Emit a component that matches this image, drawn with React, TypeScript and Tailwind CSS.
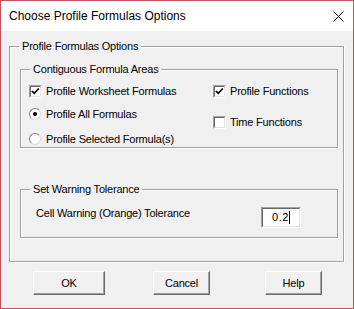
import React from "react";

const body = { fontFamily: '"Liberation Sans", Arial, sans-serif' };

function CheckBox({ checked }: { checked: boolean }) {
  return (
    <span className="w-[13px] h-[13px] flex border border-t-[#a0a0a0] border-l-[#a0a0a0] border-r-white border-b-white shrink-0">
      <span className="flex-1 flex items-center justify-center bg-white border border-t-[#696969] border-l-[#696969] border-r-[#e3e3e3] border-b-[#e3e3e3]">
        {checked && (
          <svg width="9" height="9" viewBox="0 0 9 9">
            <polyline points="1,4 3.2,6.3 7.8,1.5" fill="none" stroke="#000" strokeWidth="1.8" />
          </svg>
        )}
      </span>
    </span>
  );
}

function Radio({ checked }: { checked: boolean }) {
  return (
    <span className="w-[12px] h-[12px] rounded-full flex items-center justify-center bg-white border border-t-[#808080] border-l-[#808080] border-r-[#d8d8d8] border-b-[#d8d8d8] shrink-0">
      {checked && <span className="w-[4px] h-[4px] rounded-full bg-black" />}
    </span>
  );
}

function Button({ label, w }: { label: string; w: string }) {
  return (
    <button
      className={`${w} h-[24px] flex items-center justify-center bg-[#f0f0f0] border border-t-white border-l-white border-r-[#696969] border-b-[#696969] shadow-[inset_-1px_-1px_0_#a0a0a0] text-[11px] tracking-[-0.2px] text-black`}
      style={body}
    >
      {label}
    </button>
  );
}

export default function App() {
  return (
    <div className="w-[354px] h-[309px] flex flex-col bg-[#f0f0f0] border border-[#c4505c] overflow-hidden">
      <div className="h-[30px] shrink-0 bg-white flex items-center justify-between pl-[8px] pr-[9px]">
        <span className="text-[12px] text-black leading-[16px]" style={body}>
          Choose Profile Formulas Options
        </span>
        <svg width="11" height="11" viewBox="0 0 11 11" className="mt-[1px]">
          <line x1="0.5" y1="0.5" x2="10.5" y2="10.5" stroke="#000" strokeWidth="1" />
          <line x1="10.5" y1="0.5" x2="0.5" y2="10.5" stroke="#000" strokeWidth="1" />
        </svg>
      </div>

      <div className="flex flex-col text-[11px] tracking-[-0.2px] text-black" style={body}>
        <fieldset className="ml-[8px] mt-[7px] w-[335px] h-[224px] border border-[#a0a0a0] shadow-[inset_1px_1px_0_#fff,1px_1px_0_#fff]">
          <legend className="ml-[9px] px-[3px] leading-[16px]">Profile Formulas Options</legend>

          <fieldset className="ml-[10px] mt-[7px] w-[318px] h-[87px] border border-[#a0a0a0] shadow-[inset_1px_1px_0_#fff,1px_1px_0_#fff]">
            <legend className="ml-[9px] px-[3px] leading-[16px]">Contiguous Formula Areas</legend>
            <div className="flex pl-[8px]">
              <div className="w-[184px] flex flex-col">
                <div className="h-[16px] mt-[6px] flex items-center gap-[4px]">
                  <CheckBox checked />
                  <span>Profile Worksheet Formulas</span>
                </div>
                <div className="h-[16px] mt-[7px] flex items-center gap-[4px]">
                  <Radio checked />
                  <span className="ml-[1px]">Profile All Formulas</span>
                </div>
                <div className="h-[16px] mt-[9px] flex items-center gap-[4px]">
                  <Radio checked={false} />
                  <span className="ml-[1px]">Profile Selected Formula(s)</span>
                </div>
              </div>
              <div className="flex flex-col">
                <div className="h-[16px] mt-[6px] flex items-center gap-[4px]">
                  <CheckBox checked />
                  <span>Profile Functions</span>
                </div>
                <div className="h-[16px] mt-[15px] flex items-center gap-[4px]">
                  <CheckBox checked={false} />
                  <span>Time Functions</span>
                </div>
              </div>
            </div>
          </fieldset>

          <fieldset className="ml-[10px] mt-[33px] w-[318px] h-[57px] border border-[#a0a0a0] shadow-[inset_1px_1px_0_#fff,1px_1px_0_#fff]">
            <legend className="ml-[9px] px-[3px] leading-[16px]">Set Warning Tolerance</legend>
            <div className="flex items-start justify-between pl-[15px] pr-[36px] mt-[8px]">
              <span className="leading-[16px]">Cell Warning (Orange) Tolerance</span>
              <div className="mt-[2px] w-[40px] h-[21px] flex border border-t-[#a0a0a0] border-l-[#a0a0a0] border-r-white border-b-white">
                <div className="flex-1 flex items-center justify-center bg-white border border-t-[#696969] border-l-[#696969] border-r-[#e3e3e3] border-b-[#e3e3e3]">
                  <span className="tracking-[0.5px]">0.2</span>
                  <span className="w-[1px] h-[13px] bg-black" />
                </div>
              </div>
            </div>
          </fieldset>
        </fieldset>

        <div className="flex mt-[9px] pl-[32px]">
          <Button label="OK" w="w-[72px]" />
          <div className="w-[48px]" />
          <Button label="Cancel" w="w-[57px]" />
          <div className="w-[55px]" />
          <Button label="Help" w="w-[57px]" />
        </div>
      </div>
    </div>
  );
}
